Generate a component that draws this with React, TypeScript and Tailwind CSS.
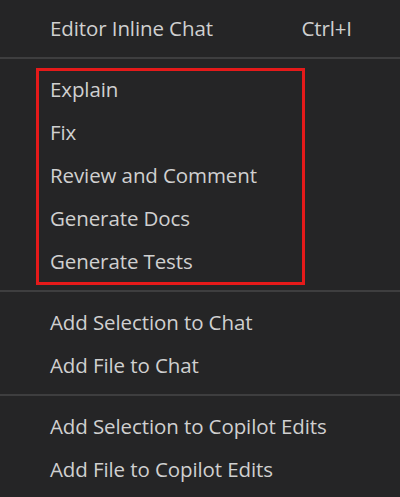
import React from "react"

type Item = { label: string; shortcut?: string }

const groups: Item[][] = [
  [{ label: "Editor Inline Chat", shortcut: "Ctrl+I" }],
  [
    { label: "Explain" },
    { label: "Fix" },
    { label: "Review and Comment" },
    { label: "Generate Docs" },
    { label: "Generate Tests" },
  ],
  [{ label: "Add Selection to Chat" }, { label: "Add File to Chat" }],
  [{ label: "Add Selection to Copilot Edits" }, { label: "Add File to Copilot Edits" }],
]

function MenuRow({ item }: { item: Item }) {
  return (
    <div className="flex h-[43px] items-center justify-between pl-[50px] pr-[48px]">
      <span>{item.label}</span>
      {item.shortcut && <span>{item.shortcut}</span>}
    </div>
  )
}

export default function App() {
  return (
    <div
      className="relative h-[497px] w-[400px] overflow-hidden bg-[#252526] pt-[7px] text-[20.5px] tracking-[-0.1px] text-[#d0d0d0]"
      style={{ fontFamily: '"Open Sans", "Noto Sans", sans-serif' }}
    >
      {groups.map((group, gi) => (
        <div key={gi}>
          {gi > 0 && (
            <div className="pt-[7px] pb-[9px]">
              <div className="h-[2px] bg-[#3e3e3f]" />
            </div>
          )}
          {group.map((item) => (
            <MenuRow key={item.label} item={item} />
          ))}
        </div>
      ))}

      {/* annotation box */}
      <div className="pointer-events-none absolute left-[36px] top-[68px] h-[217px] w-[269px] border-[3px] border-[#e51a1a]" />
    </div>
  )
}
